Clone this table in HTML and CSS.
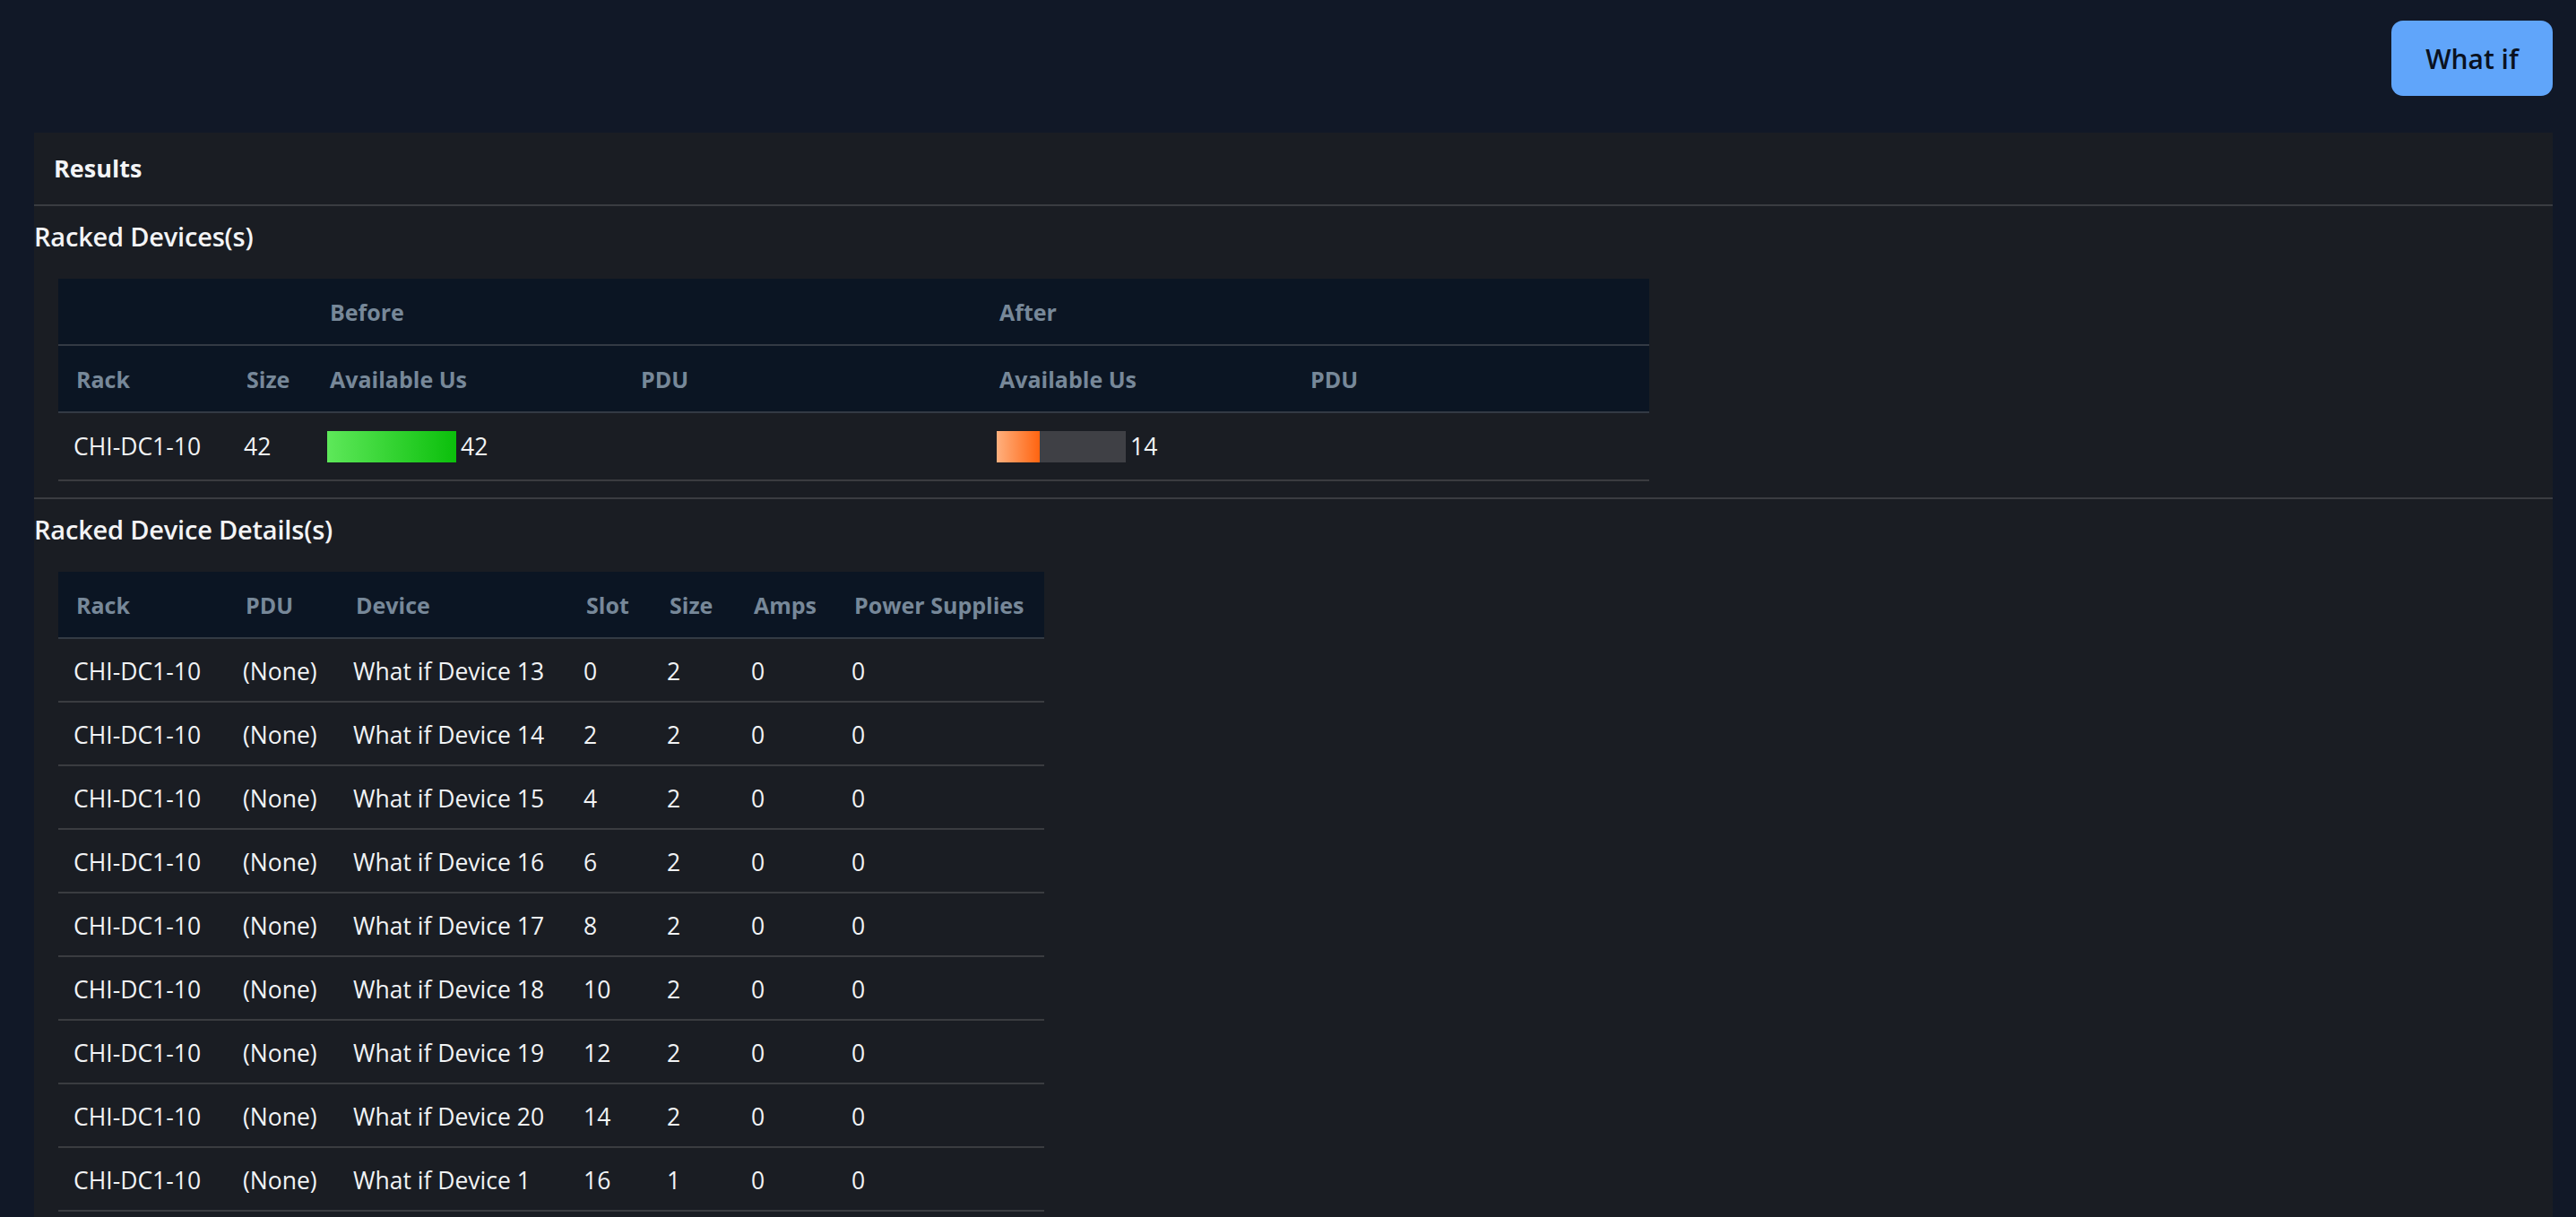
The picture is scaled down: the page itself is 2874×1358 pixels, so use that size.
FILE: index.html
```html
<!DOCTYPE html>
<html lang="en">
<head>
<meta charset="utf-8">
<title>What if - Results</title>
<link rel="stylesheet" href="styles.css">
</head>
<body>
<div class="page">
  <div class="toolbar">
    <button class="btn-primary" type="button">What if</button>
  </div>

  <section class="panel">
    <div class="panel-header">Results</div>

    <div class="panel-section">
      <h3 class="section-title">Racked Devices(s)</h3>
      <table class="data-table racks-table">
        <colgroup>
          <col class="c-rack"><col class="c-size"><col class="c-avail"><col class="c-pdu"><col class="c-avail2"><col class="c-pdu2">
        </colgroup>
        <thead>
          <tr>
            <th colspan="2"></th>
            <th colspan="2">Before</th>
            <th colspan="2">After</th>
          </tr>
          <tr>
            <th>Rack</th>
            <th>Size</th>
            <th>Available Us</th>
            <th>PDU</th>
            <th>Available Us</th>
            <th>PDU</th>
          </tr>
        </thead>
        <tbody>
          <tr class="bar-row">
            <td>CHI-DC1-10</td>
            <td>42</td>
            <td>
              <div class="usage">
                <span class="bar"><span class="fill fill-green" style="width:100%"></span></span>
                <span class="usage-value">42</span>
              </div>
            </td>
            <td></td>
            <td>
              <div class="usage">
                <span class="bar"><span class="fill fill-orange" style="width:33.33%"></span></span>
                <span class="usage-value">14</span>
              </div>
            </td>
            <td></td>
          </tr>
        </tbody>
      </table>
    </div>

    <div class="panel-section">
      <h3 class="section-title">Racked Device Details(s)</h3>
      <table class="data-table details-table">
        <colgroup>
          <col class="d-rack"><col class="d-pdu"><col class="d-device"><col class="d-slot"><col class="d-size"><col class="d-amps"><col class="d-ps">
        </colgroup>
        <thead>
          <tr>
            <th>Rack</th>
            <th>PDU</th>
            <th>Device</th>
            <th>Slot</th>
            <th>Size</th>
            <th>Amps</th>
            <th>Power Supplies</th>
          </tr>
        </thead>
        <tbody>
          <tr><td>CHI-DC1-10</td><td>(None)</td><td>What if Device 13</td><td>0</td><td>2</td><td>0</td><td>0</td></tr>
          <tr><td>CHI-DC1-10</td><td>(None)</td><td>What if Device 14</td><td>2</td><td>2</td><td>0</td><td>0</td></tr>
          <tr><td>CHI-DC1-10</td><td>(None)</td><td>What if Device 15</td><td>4</td><td>2</td><td>0</td><td>0</td></tr>
          <tr><td>CHI-DC1-10</td><td>(None)</td><td>What if Device 16</td><td>6</td><td>2</td><td>0</td><td>0</td></tr>
          <tr><td>CHI-DC1-10</td><td>(None)</td><td>What if Device 17</td><td>8</td><td>2</td><td>0</td><td>0</td></tr>
          <tr><td>CHI-DC1-10</td><td>(None)</td><td>What if Device 18</td><td>10</td><td>2</td><td>0</td><td>0</td></tr>
          <tr><td>CHI-DC1-10</td><td>(None)</td><td>What if Device 19</td><td>12</td><td>2</td><td>0</td><td>0</td></tr>
          <tr><td>CHI-DC1-10</td><td>(None)</td><td>What if Device 20</td><td>14</td><td>2</td><td>0</td><td>0</td></tr>
          <tr><td>CHI-DC1-10</td><td>(None)</td><td>What if Device 1</td><td>16</td><td>1</td><td>0</td><td>0</td></tr>
        </tbody>
      </table>
    </div>
  </section>
</div>
</body>
</html>
```

FILE: styles.css
```css
html, body {
  margin: 0;
  padding: 0;
  overflow: hidden;
  background: #111827;
}

body {
  font-family: "Open Sans", "Noto Sans", sans-serif;
  color: #f1f3f5;
}

.page {
  padding: 23px 26px 0 38px;
}

.toolbar {
  display: flex;
  justify-content: flex-end;
}

.btn-primary {
  width: 180px;
  height: 84px;
  border: 0;
  border-radius: 13px;
  background: #60a5fa;
  color: #0a1120;
  font-family: "Open Sans", sans-serif;
  font-weight: 600;
  font-size: 30px;
  padding: 0;
  cursor: pointer;
}

.panel {
  margin-top: 41px;
  background: #1a1d23;
}

.panel-header {
  padding: 24px 22px;
  line-height: 32px;
  font-size: 27px;
  font-weight: 700;
  color: #f3f4f6;
  border-bottom: 2px solid #3a3c41;
}

.panel-section {
  padding: 14px 0 18px;
  border-bottom: 2px solid #3a3c41;
}

.section-title {
  margin: 0;
  font-size: 29px;
  line-height: 40px;
  font-weight: 600;
  color: #f3f4f6;
  letter-spacing: -0.2px;
}

.data-table {
  margin: 27px 0 0 27px;
  border-collapse: collapse;
  table-layout: fixed;
}

.data-table th {
  background: #0b1523;
  color: #778899;
  font-weight: 700;
  font-size: 25px;
  line-height: 32px;
  text-align: left;
  padding: 21px 20px 20px;
  border-bottom: 2px solid #333a44;
  white-space: nowrap;
}

.data-table td {
  font-size: 26.5px;
  line-height: 29px;
  padding: 22px 17px 18px;
  border-bottom: 2px solid #3a3c40;
  white-space: nowrap;
  vertical-align: middle;
}

.racks-table { width: 1775px; }
.c-rack { width: 190px; }
.c-size { width: 93px; }
.c-avail { width: 347px; }
.c-pdu { width: 400px; }
.c-avail2 { width: 347px; }
.c-pdu2 { width: 398px; }

.racks-table .bar-row td {
  padding: 20px 17px 19px;
  line-height: 35px;
}

.usage {
  display: flex;
  align-items: center;
  gap: 5px;
  height: 35px;
}

.bar {
  display: block;
  width: 144px;
  height: 35px;
  background: #3f4045;
}

.fill {
  display: block;
  height: 100%;
}

.fill-green {
  background: linear-gradient(to right, #5ee85a, #0bbf0b);
}

.fill-orange {
  background: linear-gradient(to right, #ffb07e, #ff6410);
}

.details-table { width: 1100px; }
.d-rack { width: 189px; }
.d-pdu { width: 123px; }
.d-device { width: 257px; }
.d-slot { width: 93px; }
.d-size { width: 94px; }
.d-amps { width: 112px; }
.d-ps { width: 232px; }
```
